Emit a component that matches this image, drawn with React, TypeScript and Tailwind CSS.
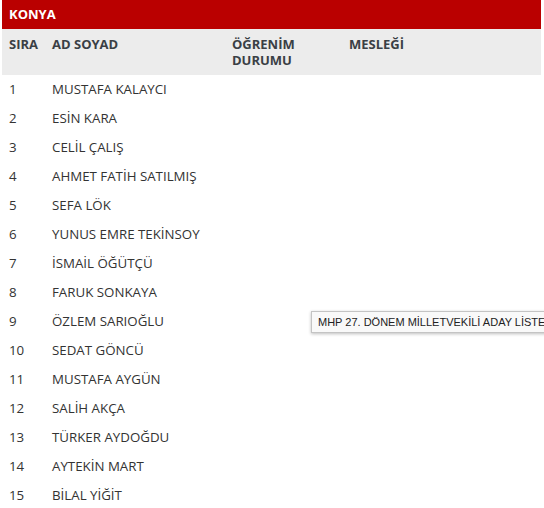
const rows = [
  'MUSTAFA KALAYCI',
  'ESİN KARA',
  'CELİL ÇALIŞ',
  'AHMET FATİH SATILMIŞ',
  'SEFA LÖK',
  'YUNUS EMRE TEKİNSOY',
  'İSMAİL ÖĞÜTÇÜ',
  'FARUK SONKAYA',
  'ÖZLEM SARIOĞLU',
  'SEDAT GÖNCÜ',
  'MUSTAFA AYGÜN',
  'SALİH AKÇA',
  'TÜRKER AYDOĞDU',
  'AYTEKİN MART',
  'BİLAL YİĞİT',
];

export default function App() {
  return (
    <div className="relative h-[508px] w-[544px] overflow-hidden bg-white font-['Open_Sans',sans-serif] text-[#333]">
      <div className="ml-[2px] mr-[3px]">
        <div className="flex h-[29px] items-center bg-[#ba0000] pl-[7px] pt-[1px] text-[13px] font-bold text-white">
          KONYA
        </div>
        <div className="grid h-[46px] grid-cols-[43px_180px_117px_1fr] bg-[#ececec] pl-[7px] pt-[7px] text-[13px] font-bold leading-[16px] text-[#3a3f45]">
          <div>SIRA</div>
          <div>AD SOYAD</div>
          <div className="flex flex-col">
            <span>ÖĞRENİM</span>
            <span>DURUMU</span>
          </div>
          <div>MESLEĞİ</div>
        </div>
        {rows.map((name, i) => (
          <div
            key={i}
            className="grid h-[29px] grid-cols-[43px_180px_117px_1fr] items-center pl-[7px] text-[13.3px] text-[#333]"
          >
            <div>{i + 1}</div>
            <div>{name}</div>
            <div></div>
            <div></div>
          </div>
        ))}
      </div>
      <div className="absolute left-[311px] top-[311px] whitespace-nowrap border border-[#c4c4c4] bg-[#f9f9f9] px-[6px] py-[2px] font-['Liberation_Sans',sans-serif] text-[11px] leading-[16px] text-[#222] shadow-[0_1px_3px_rgba(0,0,0,0.25)]">
        MHP 27. DÖNEM MİLLETVEKİLİ ADAY LİSTESİ
      </div>
    </div>
  );
}
